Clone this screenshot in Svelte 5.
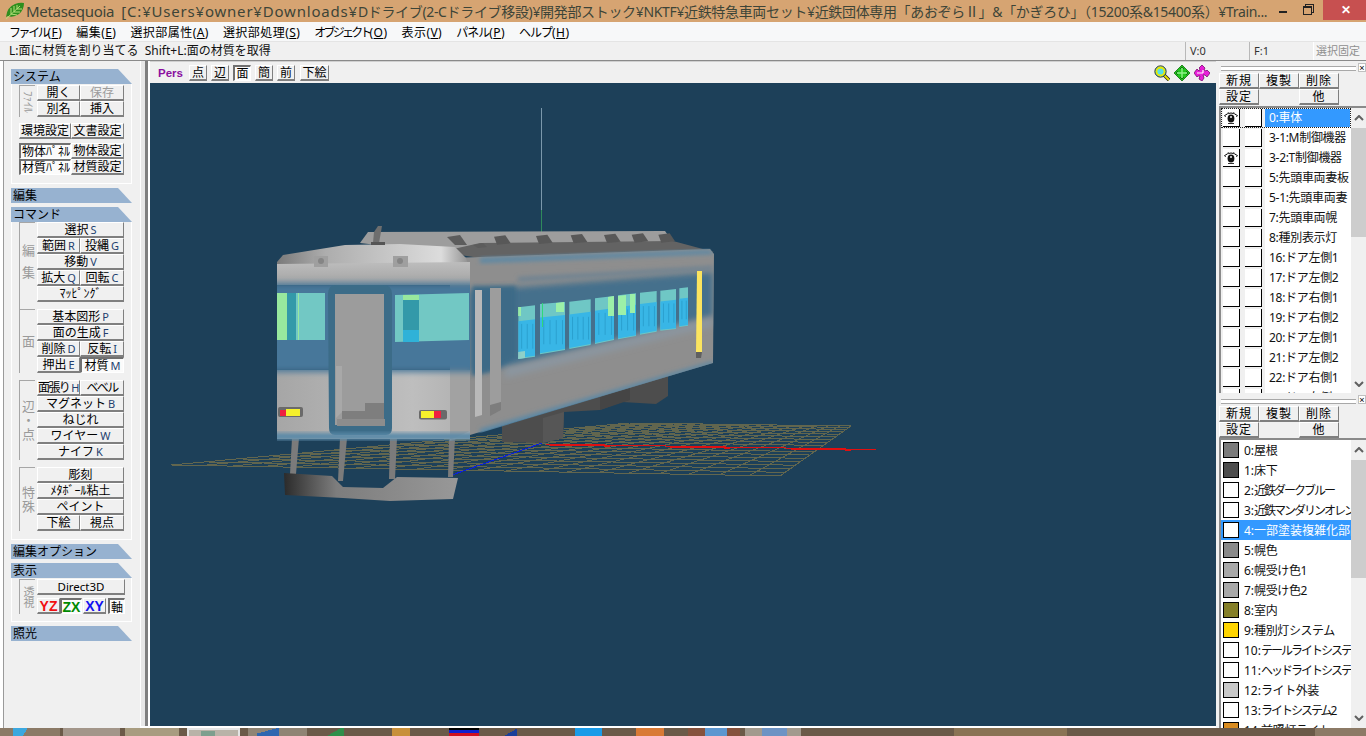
<script>
  const menus = [['ファイル','F','k1'],['編集','E',''],['選択部属性','A',''],['選択部処理','S',''],['オブジェクト','O','k2'],['表示','V',''],['パネル','P','k3'],['ヘルプ','H','k3']];
  const tools = [['点',false],['辺',false],['面',true],['簡',false],['前',false],['下絵',false]];
  const sysFile = [['開く',''],['保存','','dis'],['別名',''],['挿入','']];
  const cmd = [
    {label:'編集', spaced:true, pad:true, rows:[[['選択','S']],[['範囲','R'],['投縄','G']],[['移動','V']],[['拡大','Q'],['回転','C']],[['ﾏｯﾋﾟﾝｸﾞ','']]]},
    {label:'面', rows:[[['基本図形','P']],[['面の生成','F']],[['削除','D'],['反転','I']],[['押出','E'],['材質','M','on']]]},
    {label:'辺・点', gap:true, rows:[[['面張り','H','tight'],['ベベル','','tight']],[['マグネット','B']],[['ねじれ','']],[['ワイヤー','W']],[['ナイフ','K']]]},
    {label:'特殊', gap:true, rows:[[['彫刻','']],[['ﾒﾀﾎﾞｰﾙ粘土','']],[['ペイント','']],[['下絵',''],['視点','']]]}
  ];
  const objects = [['0:車体',true],['3-1:M制御機器',false],['3-2:T制御機器',true],['5:先頭車両妻板',false],['5-1:先頭車両妻',false],['7:先頭車両幌',false],['8:種別表示灯',false],['16:ドア左側1',false],['17:ドア左側2',false],['18:ドア右側1',false],['19:ドア右側2',false],['20:ドア左側1',false],['21:ドア左側2',false],['22:ドア右側1',false],['23:ドア右側2',false]];
  const mats = [['0:','屋根','#7b7b7b'],['1:','床下','#4d4d4d'],['2:','近鉄ダークブルー','#fff'],['3:','近鉄マンダリンオレンジ','#fff'],['4:','一部塗装複雑化部品','#fff'],['5:','幌色','#8a8a8a'],['6:','幌受け色1','#a8a8a8'],['7:','幌受け色2','#a8a8a8'],['8:','室内','#857f28'],['9:','種別灯システム','#ffd500'],['10:','テールライトシステム','#fff'],['11:','ヘッドライトシステム','#fff'],['12:','ライト外装','#c8c8c8'],['13:','ライトシステム2','#fff'],['14:','前照灯ライト','#d98c20']];
  const kanaCount = (s) => (s.match(/[ァ-ヶー]/g) || []).length;

  // Floor grid
  const A=[171,465],B=[629,423],C=[851,426],D=[780,476];
  const lerp=(p,q,t)=>[p[0]+(q[0]-p[0])*t,p[1]+(q[1]-p[1])*t];
  const gridLines=[];
  for(let i=0;i<=17;i++){const t=Math.pow(i/17,1.25);const a=lerp(B,A,t),b=lerp(C,D,t);gridLines.push([a,b]);}
  for(let i=0;i<=20;i++){const t=i/20;const a=lerp(A,D,t),b=lerp(B,C,t);gridLines.push([a,b]);}

  // Side windows: x1,x2, top y at x1,x2, bottom y at x1,x2
  const w=(a,b,c,d,e,f)=>({x1:480+a/3,x2:480+b/3,t1:210+c/3,t2:210+d/3,b1:210+e/3,b2:210+f/3});
  const wins=[w(115,165,292,286,447,440),w(180,255,282,276,433,420),w(268,332,275,268,417,405),w(345,402,265,258,402,390),w(414,468,256,250,388,378),w(480,530,248,243,374,365),w(541,588,242,237,362,357),w(598,624,235,232,351,347)];
  const poly=(w,f0,f1)=>{
    const y=(x,f)=>{const t=x===w.x1?w.t1:w.t2,b=x===w.x1?w.b1:w.b2;return t+(b-t)*f;};
    return `${w.x1},${y(w.x1,f0)} ${w.x2},${y(w.x2,f0)} ${w.x2},${y(w.x2,f1)} ${w.x1},${y(w.x1,f1)}`;
  };
  const seatLines=(w)=>{const n=Math.max(2,Math.round((w.x2-w.x1)/6));return Array.from({length:n},(_,i)=>w.x1+(i+.6)*(w.x2-w.x1)/n);};
  const vents=[[42,80],[168,78],[272,76],[372,75],[455,74],[535,74]];
</script>

{#snippet btn(b, extra = '')}
  <div class="btn {extra} {b[2] || ''}">{b[0]}{#if b[1]}<span class="key">{b[1]}</span>{/if}</div>
{/snippet}

{#snippet eye()}
  <svg class="eye" viewBox="0 0 16 14" width="16" height="14">
    <path d="M1 5 Q8 -1 15 5" fill="none" stroke="#000" stroke-width="1"/>
    <path d="M3 6 L1 4 M6 3 L5 1 M10 3 L11 1 M13 6 L15 4" stroke="#555" stroke-width="1"/>
    <ellipse cx="8" cy="7.5" rx="3.4" ry="4" fill="#111"/>
    <rect x="7" y="5" width="2" height="2" fill="#bbb"/>
    <path d="M5 12.5 H11" stroke="#333"/>
  </svg>
{/snippet}

{#snippet scroll(thumb)}
  <div class="scroll">
    <div class="sarrow"><svg viewBox="0 0 10 6" width="10" height="6"><path d="M1 5 L5 1 L9 5" fill="none" stroke="#606060" stroke-width="2"/></svg></div>
    <div class="thumb" class:thumb-top={thumb === 'top'} class:thumb-bottom={thumb === 'bottom'}></div>
    <div class="strack"></div>
    <div class="sarrow"><svg viewBox="0 0 10 6" width="10" height="6"><path d="M1 1 L5 5 L9 1" fill="none" stroke="#606060" stroke-width="2"/></svg></div>
  </div>
{/snippet}

{#snippet panelHead()}
  <div class="phead"><div class="grip"></div><div class="pclose">×</div></div>
  <div class="pbtns">
    <div class="btn">新規</div><div class="btn">複製</div><div class="btn">削除</div>
    <div class="btn">設定</div><div class="blank"></div><div class="btn">他</div>
  </div>
{/snippet}

<div class="app">
  <header class="title">
    <svg class="logo" viewBox="0 0 20 18" width="20" height="18">
      <path d="M1 15 Q2 5 10 2 Q15 0 19 1 Q19 8 14 12 Q8 16 3 14 Z" fill="#2f8f1e"/>
      <path d="M1 17 L15 4 M6 12 L6 6 M9 10 L9 4 M12 7 L12 3 M6 12 L12 13 M9 10 L15 10 M12 7 L17 7" stroke="#b7e07a" stroke-width="1" fill="none"/>
    </svg>
    <div class="ttext">Metasequoia&nbsp; <span class="tlat">[C:¥Users¥owner¥Downloads¥</span><span class="tcjk">Dドライブ(2-Cドライブ移設)¥開発部ストック¥NKTF¥近鉄特急車両セット¥近鉄団体専用「あおぞらⅡ」&「かぎろひ」（15200系&15400系）¥Train...</span></div>
    <div class="winctl">
      <div class="wbtn"><span class="min"></span></div>
      <div class="wbtn"><span class="rest"></span></div>
      <div class="wclose">✕</div>
    </div>
  </header>

  <nav class="menu">
    {#each menus as m}
      <span class="mi"><span class={m[2]}>{m[0]}</span>(<u>{m[1]}</u>)</span>
    {/each}
  </nav>

  <div class="status">
    <div class="smain">L:面に材質を割り当てる&nbsp; Shift+L:面の材質を取得</div>
    <div class="scell">V:0</div>
    <div class="scell">F:1</div>
    <div class="scell fixed">選択固定</div>
  </div>

  <main class="work">
    <aside class="side">
      <div class="shead">システム</div>
      <div class="sbody">
        <div class="grp">
          <div class="vlabel sideways">ﾌｧｲﾙ</div>
          <div class="bgrid">
            {#each sysFile as b}
              {@render btn(b)}
            {/each}
          </div>
        </div>
        <div class="wide mt6">
          <div class="btn">環境設定</div><div class="btn">文書設定</div>
        </div>
        <div class="wide mt4">
          <div class="btn on clip">物体ﾊﾟﾈﾙ</div><div class="btn">物体設定</div>
          <div class="btn on clip">材質ﾊﾟﾈﾙ</div><div class="btn">材質設定</div>
        </div>
      </div>
      <div class="shead">編集</div>
      <div class="shead">コマンド</div>
      <div class="sbody cmd">
        {#each cmd as g}
          <div class="grp" class:pad={g.pad} class:gtop={g.gap}>
            <div class="vlabel" class:spaced={g.spaced}>{g.label}</div>
            <div class="bgrid">
              {#each g.rows as r}
                {#if r.length === 1}
                  {@render btn(r[0], 'span2')}
                {:else}
                  {@render btn(r[0])}
                  {@render btn(r[1])}
                {/if}
              {/each}
            </div>
          </div>
        {/each}
      </div>
      <div class="shead">編集オプション</div>
      <div class="shead">表示</div>
      <div class="sbody disp">
        <div class="grp">
          <div class="vlabel short">透視</div>
          <div class="dcol">
            <div class="btn d3d">Direct3D</div>
            <div class="axes">
              <div class="btn ax yz">YZ</div>
              <div class="btn ax zx on">ZX</div>
              <div class="btn ax xy">XY</div>
              <div class="btn ax jiku on">軸</div>
            </div>
          </div>
        </div>
      </div>
      <div class="shead">照光</div>
    </aside>

    <div class="split"></div>

    <section class="center">
      <div class="toolbar">
        <span class="pers">Pers</span>
        {#each tools as t}
          <div class="btn tool" class:wide2={t[0] === '下絵'} class:on={t[1]}>{t[0]}</div>
        {/each}
        <div class="ticons">
          <svg viewBox="0 0 16 16" width="16" height="16">
            <path d="M10 10 L15 15" stroke="#222" stroke-width="3.4"/>
            <path d="M10 10 L15 15" stroke="#e8e000" stroke-width="2"/>
            <circle cx="6.5" cy="6.5" r="5.6" fill="#3fd8e8" stroke="#222" stroke-width="1"/>
            <circle cx="6.5" cy="6.5" r="4" fill="#53e0ea" stroke="#ece800" stroke-width="1.8"/>
          </svg>
          <svg viewBox="0 0 16 16" width="16" height="16">
            <path d="M8 0 L16 8 L8 16 L0 8 Z" fill="#23c61f" stroke="#0a6a0a" stroke-width=".8"/>
            <path d="M8 2.5 V13.5 M2.5 8 H13.5" stroke="#8ff08a" stroke-width="1.4"/>
            <path d="M6 4 L8 2 L10 4 M6 12 L8 14 L10 12 M4 6 L2 8 L4 10 M12 6 L14 8 L12 10" fill="none" stroke="#0a6a0a" stroke-width=".9"/>
          </svg>
          <svg viewBox="0 0 16 16" width="16" height="16">
            <path d="M8 0 L11 3 L10 5 L12 6 L13 5 L16 8 L13 12 L11 10 L9 10 L10 13 L8 16 L5 14 L6 11 L4 11 L3 12 L0 8 L3 4 L5 6 L6 4 L5 3 Z" fill="#e81fd8" stroke="#7a0a70" stroke-width=".8"/>
            <path d="M3 8 H9 M9 8 V5" stroke="#fff" stroke-width="1.2" fill="none"/>
          </svg>
        </div>
      </div>

      <svg class="view" viewBox="150 83 1066 643" width="1066" height="643">
        <defs>
          <linearGradient id="skirt" x1="0" x2="1" y1="0" y2="0">
            <stop offset="0" stop-color="#2b2b2b"/><stop offset=".3" stop-color="#7d7d7d"/><stop offset="1" stop-color="#989898"/>
          </linearGradient>
          <linearGradient id="roofF" x1="0" x2="1" y1="0" y2="0">
            <stop offset="0" stop-color="#7a7a7a"/><stop offset=".25" stop-color="#adadad"/><stop offset=".85" stop-color="#dcdcdc"/><stop offset="1" stop-color="#8d8d8d"/>
          </linearGradient>
          <linearGradient id="low" x1="0" x2="1" y1="0" y2="0">
            <stop offset="0" stop-color="#a6a6a6"/><stop offset=".7" stop-color="#bebebe"/><stop offset="1" stop-color="#b0b0b0"/>
          </linearGradient>
          <linearGradient id="cap" x1="0" x2="0" y1="0" y2="1">
            <stop offset="0" stop-color="#bdbdbd"/><stop offset="1" stop-color="#a3a3a3"/>
          </linearGradient>
          <filter id="b2" x="-10%" y="-20%" width="120%" height="140%"><feGaussianBlur stdDeviation="2"/></filter>
          <filter id="b3" x="-10%" y="-30%" width="120%" height="160%"><feGaussianBlur stdDeviation="3"/></filter>
          <clipPath id="frontClip"><rect x="277" y="240" width="193" height="201"/></clipPath>
          <clipPath id="sideClip"><polygon points="450,256 480,255 710,248 714,254 713,363 480,433 450,441"/></clipPath>
        </defs>

        <line x1="541.5" y1="108" x2="541.5" y2="210" stroke="#7b98ab"/>
        <line x1="541.5" y1="210" x2="541.5" y2="232" stroke="#2f8a5c"/>

        <g stroke="#62664e" stroke-width="1" shape-rendering="crispEdges">
          {#each gridLines as l}
            <line x1={l[0][0]} y1={l[0][1]} x2={l[1][0]} y2={l[1][1]}/>
          {/each}
        </g>
        <g shape-rendering="crispEdges">
          <line x1="452" y1="475" x2="542" y2="443" stroke="#0a1ee0"/>
          <line x1="545" y1="444" x2="876" y2="449.5" stroke="#e01010"/>
          <line x1="550" y1="444.6" x2="610" y2="445.6" stroke="#e01010" stroke-width="2"/>
          <line x1="670" y1="446.6" x2="730" y2="447.6" stroke="#e01010" stroke-width="2"/>
          <line x1="791" y1="448.6" x2="851" y2="449.6" stroke="#e01010" stroke-width="2"/>
        </g>

        <!-- legs and skirt -->
        <g fill="#7b7b7b">
          <polygon points="292,438 299,438 296,474 290,474"/>
          <polygon points="340,438 347,438 343,481 338,481"/>
          <polygon points="390,438 397,438 395,479 389,479"/>
          <polygon points="449,438 455,438 453,477 448,477"/>
        </g>
        <polygon points="284,473 332,476 343,487 383,488 397,477 458,478 453,499 390,501 343,498 285,495" fill="url(#skirt)"/>

        <!-- underfloor -->
        <polygon points="502,426 668,376 668,396 656,404 622,402 600,410 564,412 563,438 543,443 502,442" fill="#4d4d4d"/>
        <polygon points="543,418 564,412 563,438 543,443" fill="#565656"/>
        <polygon points="600,396 630,388 630,400 600,410" fill="#454545"/>

        <!-- rear roof -->
        <polygon points="360,243 368,232 665,231 673,242 500,250 420,250" fill="#9d9d9d"/>
        <polygon points="440,252 480,243 673,241 714,252 480,258" fill="#636363"/>
        {#each vents as v}
          <polygon points="{480+v[0]/3},{210+v[1]/3} {480+(v[0]+34)/3},{210+(v[1]-4)/3} {480+(v[0]+50)/3},{210+(v[1]+20)/3} {480+(v[0]+9)/3},{210+(v[1]+24)/3}" fill="#585858"/>
        {/each}
        <polygon points="447,237 460,235 467,245 455,245" fill="#5c5c5c"/>
        <polygon points="473,245 483,243 487,247 478,248" fill="#5c5c5c"/>

        <!-- side of the car -->
        <polygon points="450,258 480,257 710,249 714,254 713,363 480,432 450,441" fill="#8e8e8e"/>
        <g clip-path="url(#sideClip)">
          <polygon points="480,258 710,250 714,254 480,263" fill="#5b88a5" filter="url(#b2)"/>
          <polygon points="470,291 713,272 713,316 518,365 470,372" fill="#44708c" filter="url(#b3)"/>
          <polygon points="518,277 713,266 713,270 518,282" fill="#6f8392" filter="url(#b2)"/>
          <polygon points="505,368 713,318 713,326 505,378" fill="#8b96a0" filter="url(#b3)"/>
          <polygon points="480,429 713,361 713,365 480,436" fill="#5b88a5" filter="url(#b2)"/>
        </g>

        {#each wins as w}
          <polygon points={poly(w,0,1)} fill="#6fc7c5"/>
          <polygon points={poly(w,.27,.98)} fill="#38b6e6"/>
          {#each seatLines(w) as x}
            <line x1={x} y1={w.t1+(w.b1-w.t1)*.32} x2={x} y2={w.t1+(w.b1-w.t1)*.8} stroke="#2ba0cf"/>
          {/each}
        {/each}
        <polygon points="518,307 521,307 521,316 518,316" fill="#9cf0a8"/>
        <polygon points="556,303 564,302 564,312 556,312" fill="#9cf0a8"/>
        <polygon points="608,297 614,296 614,316 608,316" fill="#9cf0a8"/>
        <polygon points="618,296 626,295 626,315 618,315" fill="#9cf0a8"/>
        <polygon points="630,294 635,294 635,313 630,313" fill="#9cf0a8"/>
        <line x1="542.5" y1="303" x2="542.5" y2="327" stroke="#2fd87a"/>
        <polygon points="518,352 525,351 525,358 518,359" fill="#8fd0c8"/>

        <polygon points="697,271 702,271 702,352 696,352" fill="#fbe45f"/>
        <polygon points="696,352 702,352 701,358 696,358" fill="#5f5f5f"/>

        <!-- side door -->
        <polygon points="472,286 516,286 516,357 490,372 472,376" fill="#3d6a87" filter="url(#b2)"/>
        <polygon points="475,290 482,290 482,415 475,417" fill="#b9b9b9"/>
        <polygon points="490,288 501,288 501,402 490,407" fill="#9d9d9d"/>
        <polygon points="490,405 501,402 501,410 490,416" fill="#7d7d7d"/>

        <!-- front -->
        <polygon points="277,262 283,255 345,245 400,244 455,247 466,258 470,270 470,282 277,282" fill="url(#roofF)"/>
        <polygon points="277,264 470,262 470,285 277,285" fill="url(#cap)"/>
        <rect x="314" y="256" width="14" height="11" fill="#9f9f9f"/>
        <rect x="393" y="256" width="15" height="11" fill="#9f9f9f"/>
        <circle cx="321" cy="261" r="3" fill="#858585"/>
        <circle cx="400" cy="261" r="3" fill="#858585"/>

        <rect x="277" y="370" width="193" height="69" fill="url(#low)"/>
        <polygon points="450,370 470,370 470,431 450,440" fill="#a2a2a2"/>
        <g clip-path="url(#frontClip)">
          <rect x="265" y="283" width="217" height="89" fill="#47779a" filter="url(#b3)"/>
        </g>

        <!-- front windows -->
        <rect x="277" y="293" width="48" height="47" fill="#72c8c4"/>
        <rect x="277" y="293" width="10" height="47" fill="#98e89e"/>
        <rect x="287" y="293" width="9" height="47" fill="#3399a9"/>
        <rect x="298" y="293" width="1" height="47" fill="#98e89e"/>
        <polygon points="395,295 469,293 469,340 395,342" fill="#72c8c4"/>
        <rect x="403" y="295" width="16" height="5" fill="#98e89e"/>
        <rect x="403" y="300" width="16" height="30" fill="#3399a9"/>
        <rect x="403" y="330" width="16" height="12" fill="#2fb2d8"/>

        <!-- front door -->
        <path d="M336 285 H383 Q392 285 392 294 V428 Q392 435 386 435 H335 Q329 435 329 428 L328 294 Q328 285 336 285 Z" fill="#3c6c88"/>
        <rect x="335" y="294" width="49" height="131" fill="#9c9c9c"/>
        <polygon points="336,366 342,366 342,412 336,418" fill="#a8a8a8"/>
        <polygon points="342,411 365,411 365,403 384,403 384,419 342,419" fill="#7e7e7e"/>
        <rect x="337" y="419" width="48" height="7" fill="#8d8d8d"/>

        <g clip-path="url(#frontClip)">
          <rect x="270" y="433" width="207" height="7" fill="#5a89a8" filter="url(#b2)"/>
        </g>

        <!-- tail lights -->
        <rect x="278" y="407" width="25" height="10" rx="2" fill="#6a6a6a"/>
        <rect x="280" y="410" width="6" height="6" fill="#ee2040"/>
        <rect x="286" y="409" width="14" height="7" fill="#f5f02c"/>
        <rect x="419" y="410" width="28" height="9.5" rx="2" fill="#6a6a6a"/>
        <rect x="421" y="411" width="13" height="7" fill="#f5f02c"/>
        <rect x="434" y="411" width="7" height="7" fill="#ee2040"/>

        <!-- antenna -->
        <polygon points="374,232 378,226 382,226 379,243 373,243" fill="#6e6e6e"/>
        <rect x="371" y="242" width="14" height="3" fill="#555"/>
      </svg>
    </section>

    <aside class="right">
      <div class="panel top">
        {@render panelHead()}
        <div class="list">
          <div class="rows">
            {#each objects as o, i}
              <div class="row" class:focus={i === 0}>
                <div class="cell">{#if o[1]}{@render eye()}{/if}</div>
                <div class="cell"></div>
                <div class="otext" class:sel={i === 0}>{o[0]}</div>
              </div>
            {/each}
          </div>
          {@render scroll('top')}
        </div>
      </div>
      <div class="panel bottom">
        {@render panelHead()}
        <div class="list">
          <div class="rows">
            {#each mats as m, i}
              <div class="mrow" class:sel={i === 4}>
                <svg class="sw" width="16" height="16" viewBox="0 0 16 16"><rect x=".5" y=".5" width="15" height="15" fill={m[2]} stroke="#000"/></svg>
                <span class="mnum">{m[0]}</span><span class="mtext" class:kana={kanaCount(m[1]) >= 5} class:plain={i === 4}>{m[1]}</span>
              </div>
            {/each}
          </div>
          {@render scroll('bottom')}
        </div>
      </div>
    </aside>
  </main>

  <footer class="task">
    <span class="wall w1"></span>
    <span class="chip"></span>
    <span class="tile t1"></span>
    <span class="tile t2"></span>
    <span class="tile t3"><i></i></span>
    <span class="tile t4"><b></b></span>
    <span class="dot green"></span>
    <span class="dot orange"></span>
    <span class="dot flag"></span>
    <span class="dot blue"></span>
    <span class="dot sky"></span>
    <span class="dot org2"></span>
    <span class="wall w2"></span>
    <span class="dot blue2"></span>
    <span class="tile t5"><b></b></span>
    <span class="wall w3"></span>
    <span class="wall w4"></span>
  </footer>
</div>

<style>
  :global(body){margin:0;background:#f0f0f0;overflow:hidden}
  .app{width:1366px;height:736px;display:flex;flex-direction:column;overflow:hidden;font-family:"Noto Sans","Noto Sans CJK JP",sans-serif;font-size:12px;color:#000}
  .title{height:22px;background:#d6a472;display:flex;align-items:center;flex:none}
  .logo{margin:0 1px 0 5px;flex:none}
  .ttext{font-size:15px;line-height:22px;color:#3d4438;white-space:nowrap;overflow:hidden;width:1245px;flex:none;letter-spacing:-.3px}
  .tlat{letter-spacing:.8px}
  .tcjk{font-size:14px;letter-spacing:-.34px}
  .winctl{margin-left:auto;display:flex;height:22px;align-items:flex-start}
  .wbtn{width:24px;height:20px;display:flex;align-items:center;justify-content:center}
  .min{width:8px;height:2px;background:#222;margin-top:4px}
  .rest{width:7px;height:6px;border:1px solid #222;border-top-width:2px;box-shadow:2px -2px 0 -1px #d6a472,2px -2px 0 0 #222}
  .wclose{width:45px;height:20px;margin-left:4px;background:#c75050;color:#fff;text-align:center;font-size:12px;line-height:20px;font-weight:700}
  .menu{height:19px;background:#f7f8f9;display:flex;gap:14px;padding-left:9px;align-items:center;flex:none;font-size:12px}
  .mi{white-space:nowrap;letter-spacing:.45px}
  .k1{letter-spacing:-2.4px}
  .k2{letter-spacing:-2.8px}
  .k3{letter-spacing:-1px}
  .status{height:20px;display:flex;flex:none;background:#f0f0f0;border-bottom:1px solid #8a8a8a;border-top:1px solid #e4e4e4;box-sizing:border-box}
  .smain{width:1185px;padding-left:9px;box-sizing:border-box;line-height:18px;color:#111;white-space:nowrap}
  .scell{width:64px;box-sizing:border-box;border-left:1px solid #b8b8b8;padding-left:4px;line-height:18px;color:#333;font-size:11px}
  .scell.fixed{width:53px;color:#8f8f8f;font-size:11px;white-space:nowrap;overflow:hidden;background:#f4f4f4;border-left:1px solid #fff;padding-left:2px}

  .work{height:667px;display:flex;flex:none;background:#fff}
  .side{width:137px;box-sizing:border-box;background:#f0f0f0;border-left:1px solid #9a9a9a;margin-left:3px;padding:8px 0 0 7px;flex:none}
  .shead{width:121px;height:15px;background:#97b2d0;clip-path:polygon(0 0,107px 0,121px 15px,0 15px);line-height:16px;padding-left:2px;box-sizing:border-box;margin-bottom:4px;white-space:nowrap;font-size:12px}
  .sbody{width:121px;box-sizing:border-box;border:1px solid #fff;border-top:none;padding:1px 0 8px 7px;margin-top:-4px;margin-bottom:4px}
  .cmd{padding-top:0;padding-bottom:8px}
  .disp{padding-bottom:7px}
  .grp{display:flex;gap:2px}
  .grp.pad .bgrid{margin-bottom:7px}
  .grp.gtop{margin-top:7px}
  .vlabel{width:16px;box-sizing:border-box;border-left:1px solid #a6a6a6;border-top:1px solid #a6a6a6;color:#9a9a9a;writing-mode:vertical-rl;text-align:center;line-height:14px;white-space:nowrap;flex:none;font-size:13px;letter-spacing:1px}
  .vlabel.spaced{letter-spacing:9px}
  .vlabel.sideways{text-orientation:sideways;font-size:11px;letter-spacing:0}
  .vlabel.short{height:35px;font-size:11px;letter-spacing:0}
  .bgrid{display:grid;grid-template-columns:43px 44px;grid-auto-rows:16px;align-content:start}
  .wide{display:grid;grid-template-columns:52px 53px;grid-auto-rows:16px}
  .mt6{margin-top:6px}
  .mt4{margin-top:4px}
  .btn{box-sizing:border-box;background:#f0f0f0;border-top:1px solid #fff;border-left:1px solid #fff;border-right:1px solid #7f7f7f;border-bottom:2px solid #7f7f7f;text-align:center;line-height:13px;white-space:nowrap;overflow:hidden;font-size:12px}
  .btn.on,.btn.ax.on{background:#fbfbfb;border-top:2px solid #707070;border-left:2px solid #707070;border-right:1px solid #fff;border-bottom:1px solid #fff}
  .btn.dis{color:#9c9c9c}
  .btn.clip{text-align:left;padding-left:1px}
  .btn.tight{letter-spacing:-1.6px}
  .span2{grid-column:span 2}
  .key{color:#23406e;font-size:11px;margin-left:2px;letter-spacing:0}
  .dcol{display:flex;flex-direction:column;gap:3px;width:88px}
  .d3d{height:16px;font-size:11.5px}
  .axes{display:flex;height:16px}
  .ax{font-family:"Liberation Sans",sans-serif;font-weight:700;font-size:14px;line-height:14px;width:23px;flex:none}
  .yz{color:#f01010}
  .zx{color:#008a00;width:22px}
  .xy{color:#1010f0;margin-left:1px}
  .jiku{margin-left:2px;width:17px;font-weight:400;background:#fff;font-family:"Noto Sans CJK JP",sans-serif;font-size:12px}

  .split{width:10px;flex:none;box-sizing:border-box;background:#e8e8e8;border-left:1px solid #fff;border-right:2px solid #fff;box-shadow:inset -3px 0 0 #808080;height:665px}

  .center{width:1066px;flex:none;display:flex;flex-direction:column;height:665px}
  .toolbar{height:22px;background:#f0f0f0;display:flex;align-items:center;padding-left:8px;gap:4px;box-sizing:border-box;flex:none;border-top:1px solid #d0d0d0}
  .pers{font-family:"Liberation Sans",sans-serif;font-weight:700;font-size:11.5px;color:#8a0fa0;width:27px}
  .tool{width:18px;height:16px;line-height:13px}
  .wide2{width:29px;margin-left:1px}
  .ticons{margin-left:auto;display:flex;gap:4px;padding-right:6px}
  .view{display:block;background:#1d4059;flex:none}

  .right{width:150px;flex:none;background:#f0f0f0;display:flex;flex-direction:column;height:667px}
  .panel{box-sizing:border-box;padding-left:3px;overflow:hidden;flex:none}
  .panel.top{height:332px}
  .panel.bottom{height:335px}
  .phead{height:12px;display:flex;align-items:center}
  .panel.bottom .phead{height:13px}
  .grip{width:135px;height:3px;margin-left:2px;border-top:1px solid #a8a8a8;border-bottom:1px solid #a8a8a8;background:#fff;margin-top:3px}
  .pclose{width:8px;height:9px;margin-left:2px;border:1px solid #c0c0c0;font-size:9px;line-height:8px;text-align:center;box-sizing:border-box;background:#fff;font-family:"Liberation Sans",sans-serif}
  .pbtns{display:grid;grid-template-columns:40px 40px 40px;grid-auto-rows:16px;letter-spacing:1px}
  .list{display:flex;margin-top:1px;border-top:2px solid #8a8a8a;border-left:2px solid #8a8a8a;background:#fff;overflow:hidden}
  .rows{width:130px;flex:none;overflow:hidden;background:#fff}
  .row{height:20px;display:flex;align-items:center;background:linear-gradient(90deg,#f0f0f0 44px,#fff 44px);box-sizing:border-box;white-space:nowrap;overflow:hidden}
  .row.focus{outline:1px dotted #222;outline-offset:-1px}
  .cell{width:17px;height:18px;margin-left:2px;margin-right:5px;background:#fff;border-right:1px solid #000;border-bottom:1px solid #000;box-sizing:border-box;flex:none;display:flex;align-items:center;justify-content:center}
  .row .cell:nth-child(2){margin-left:0;margin-right:3px}
  .eye{display:block}
  .otext{flex:1;height:18px;line-height:18px;padding-left:4px;overflow:hidden;font-size:12px;color:#111;letter-spacing:-.3px}
  .otext.sel{background:#3399ff;color:#fff;margin-right:1px}
  .mrow{height:20px;display:flex;align-items:center;white-space:nowrap;overflow:hidden;color:#111}
  .mrow.sel{background:#3399ff;color:#fff}
  .sw{margin-left:2px;margin-right:5px;flex:none}
  .mnum{font-size:12px;flex:none}
  .mtext{font-size:12px;letter-spacing:-.4px}
  .mtext.kana{letter-spacing:-2px}
  .mtext.plain{letter-spacing:0}
  .scroll{width:15px;flex:none;background:#f0f0f0;display:flex;flex-direction:column;height:100%}
  .sarrow{height:20px;display:flex;align-items:center;justify-content:center;flex:none}
  .thumb{background:#cdcdcd;flex:none}
  .thumb-top{height:109px}
  .thumb-bottom{height:118px}
  .strack{flex:1}
  .panel.top .list{height:286px}
  .panel.bottom .list{height:288px;margin-top:0}

  .task{height:8px;flex:none;position:relative;background:#6b5a48;overflow:hidden}
  .wall{display:block;height:8px;position:absolute;top:0}
  .w1{left:0;width:60px;background:#8b7a66}
  .chip{position:absolute;left:13px;width:22px;height:8px;top:0;background:linear-gradient(120deg,#3ba8df 55%,#8b7a66 55%)}
  .tile{position:absolute;top:0;height:8px;box-sizing:border-box}
  .t1{left:63px;width:57px;background:#a3968a}
  .t2{left:125px;width:54px;background:#a89c80}
  .t3{left:187px;width:53px;background:#b9b3a8;border:2px solid #e4e4e4;border-bottom:none}
  .t3 i{display:block;width:14px;height:6px;margin:1px 0 0 12px;background:#7e9f8e}
  .t4{left:248px;width:59px;background:#8f8474}
  .t4 b{display:block;width:22px;height:8px;margin-left:9px;background:linear-gradient(165deg,transparent 40%,#2e66b0 40%)}
  .t5{left:745px;width:56px;background:#a29a8e}
  .t5 b{display:block;width:25px;height:8px;margin-left:17px;background:#6d93c4}
  .dot{position:absolute;top:0;height:8px}
  .green{left:327px;width:17px;background:linear-gradient(150deg,transparent 45%,#2f8f4a 45%)}
  .orange{left:392px;width:18px;background:#c8903a}
  .flag{left:449px;width:30px;background:linear-gradient(#000 30%,#1020d0 30%,#1020d0 60%,#d01020 60%)}
  .blue{left:505px;width:12px;background:linear-gradient(150deg,transparent 50%,#1a3f9a 50%)}
  .sky{left:575px;width:27px;background:#1a9be8}
  .org2{left:636px;width:28px;background:#d97a35}
  .blue2{left:705px;width:22px;background:#5d97d0}
  .w2{left:688px;width:52px;background:#86523d}
  .w3{left:954px;width:113px;background:#8a7354}
  .w4{left:1315px;width:51px;background:#8c7a66}
</style>
